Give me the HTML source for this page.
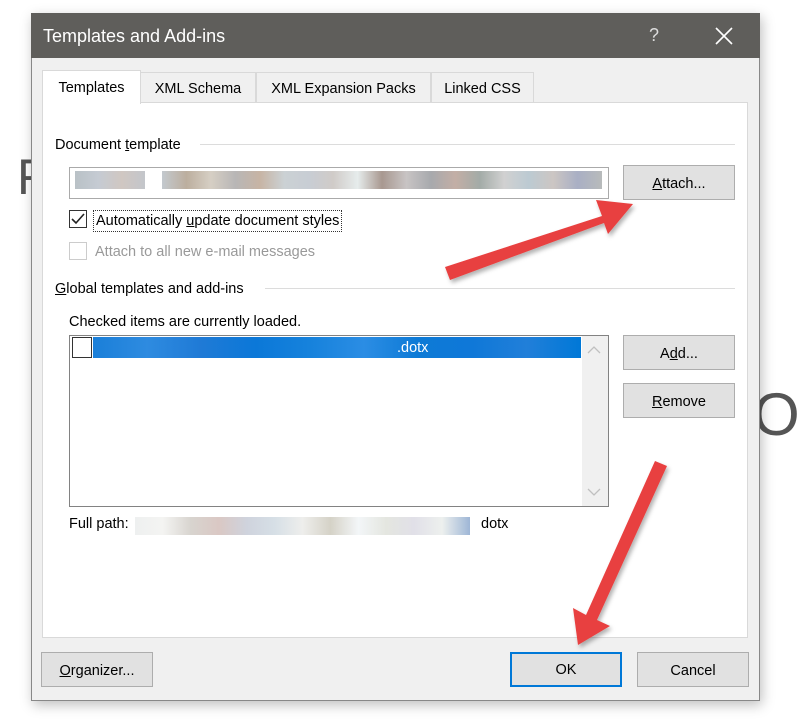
<!DOCTYPE html><html><head><style>
*{margin:0;padding:0;box-sizing:border-box}
body{width:797px;height:727px;background:#fff;position:relative;overflow:hidden;font-family:"Liberation Sans",sans-serif;font-size:14.5px;color:#000}
.a{position:absolute}
.btn{position:absolute;background:#e1e1e1;border:1px solid #adadad;text-align:center;line-height:33px;font-size:14.5px}
.cb{position:absolute;width:18px;height:18px;border:1px solid #333;background:#fff}
.bl{position:absolute;height:18px}
</style></head><body>
<div class="a" style="left:17px;top:148px;font-size:50px;color:#555">F</div>
<div class="a" style="left:753px;top:380px;font-size:60px;color:#555">O</div>
<div class="a" style="left:31px;top:13px;width:729px;height:688px;background:#f0f0f0;border:1px solid #888;box-shadow:2px 4px 12px rgba(0,0,0,.25)"></div>
<div class="a" style="left:31px;top:13px;width:729px;height:45px;background:#5f5e5b"></div>
<div class="a" style="left:43px;top:26px;color:#fff;font-size:18px">Templates and Add-ins</div>
<div class="a" style="left:649px;top:25px;color:#ddd;font-size:18px">?</div>
<svg class="a" style="left:715px;top:27px" width="18" height="18"><path d="M1 1L17 17M17 1L1 17" stroke="#fff" stroke-width="1.6"/></svg>
<div class="a" style="left:42px;top:102px;width:706px;height:536px;background:#fff;border:1px solid #d9d9d9"></div>
<div class="a" style="left:140px;top:72px;width:116px;height:31px;border:1px solid #d9d9d9;background:#f0f0f0;text-align:center;line-height:32px">XML Schema</div>
<div class="a" style="left:256px;top:72px;width:175px;height:31px;border:1px solid #d9d9d9;background:#f0f0f0;text-align:center;line-height:32px">XML Expansion Packs</div>
<div class="a" style="left:431px;top:72px;width:103px;height:31px;border:1px solid #d9d9d9;background:#f0f0f0;text-align:center;line-height:32px">Linked CSS</div>
<div class="a" style="left:42px;top:70px;width:99px;height:34px;border:1px solid #d9d9d9;border-bottom:none;background:#fff;text-align:center;line-height:35px">Templates</div>
<div class="a" style="left:55px;top:137px">Document <u>t</u>emplate</div>
<div class="a" style="left:200px;top:144px;width:535px;height:1px;background:#dcdcdc"></div>
<div class="a" style="left:69px;top:167px;width:540px;height:32px;border:1px solid #aaa;background:#fff"></div>
<div class="bl" style="left:75px;top:171px;width:70px;background:linear-gradient(90deg,#b9c1c6,#c5cbd3,#d0c7c2,#c3c6cb)"></div>
<div class="bl" style="left:162px;top:171px;width:440px;background:linear-gradient(90deg,#c3c9ce,#bcae9e,#d6cfc4,#b8b6b6,#c7b4a4,#cbd1d4,#c8cdd4,#d0cbc8,#e6ecec,#a89890,#c8c4c4,#a7a9ad,#c3aea5,#a3aba7,#d1d1d1,#bccad2,#ccc6c3,#a9afc4,#b8bbbb)"></div>
<div class="btn" style="left:623px;top:165px;width:112px;height:35px;line-height:36px"><u>A</u>ttach...</div>
<div class="cb" style="left:69px;top:210px"></div>
<svg class="a" style="left:71px;top:212px" width="14" height="14"><path d="M1 7L5 11L13 2" stroke="#222" stroke-width="1.6" fill="none"/></svg>
<div class="a" style="left:93px;top:210px;border:1px dotted #333;padding:0 2px;line-height:20px">Automatically <u>u</u>pdate document styles</div>
<div class="cb" style="left:69px;top:242px;border-color:#ccc"></div>
<div class="a" style="left:95px;top:244px;color:#999">Attach to all new e-mail messages</div>
<div class="a" style="left:55px;top:281px"><u>G</u>lobal templates and add-ins</div>
<div class="a" style="left:265px;top:288px;width:470px;height:1px;background:#dcdcdc"></div>
<div class="a" style="left:69px;top:314px">Checked items are currently loaded.</div>
<div class="a" style="left:69px;top:335px;width:540px;height:172px;border:1px solid #828282;background:#fff"></div>
<div class="a" style="left:582px;top:336px;width:26px;height:170px;background:#f0f0f0"></div>
<svg class="a" style="left:587px;top:345px" width="14" height="10"><path d="M1 8L7 2L13 8" stroke="#c0c0c0" stroke-width="1.3" fill="none"/></svg>
<svg class="a" style="left:587px;top:487px" width="14" height="10"><path d="M1 2L7 8L13 2" stroke="#c0c0c0" stroke-width="1.3" fill="none"/></svg>
<div class="a" style="left:93px;top:337px;width:488px;height:21px;background:linear-gradient(90deg,#1a7fd9,#2e8be0,#1f7ad6,#0b78d8,#1682dc,#2b8de4,#0d7ad6,#0f78d8,#217fd9,#0078d7)"></div>
<div class="a" style="left:397px;top:340px;color:#fff">.dotx</div>
<div class="a" style="left:72px;top:337px;width:20px;height:21px;border:1px solid #333;background:#fff"></div>
<div class="btn" style="left:623px;top:335px;width:112px;height:35px;line-height:36px">A<u>d</u>d...</div>
<div class="btn" style="left:623px;top:383px;width:112px;height:35px;line-height:36px"><u>R</u>emove</div>
<div class="a" style="left:69px;top:516px">Full path:</div>
<div class="bl" style="left:135px;top:517px;width:335px;background:linear-gradient(90deg,#eef0f0,#f4f4f2,#d8d4cf,#dac8c4,#cfd3dd,#d6dfe6,#eeeeec,#d5d2c7,#f3f6f8,#e4e6e0,#e1e0e8,#edf0ee,#9eb6d6)"></div>
<div class="a" style="left:481px;top:516px">dotx</div>
<div class="btn" style="left:41px;top:652px;width:112px;height:35px;line-height:37px"><u>O</u>rganizer...</div>
<div class="btn" style="left:510px;top:652px;width:112px;height:35px;border:2px solid #0078d7;line-height:33px">OK</div>
<div class="btn" style="left:637px;top:652px;width:112px;height:35px;line-height:37px">Cancel</div>
<svg class="a" style="left:0;top:0" width="797" height="727">
<defs><filter id="s"><feDropShadow dx="2" dy="3" stdDeviation="2" flood-opacity=".3"/></filter></defs>
<g fill="#e8403f" filter="url(#s)">
<path d="M445 267L602 216L596 200L633 204L608 234L604 223L450 280Z"/>
<path d="M655 461L667 466L597 620L610 626L578 645L573 608L586 615Z"/>
</g></svg>
</body></html>
